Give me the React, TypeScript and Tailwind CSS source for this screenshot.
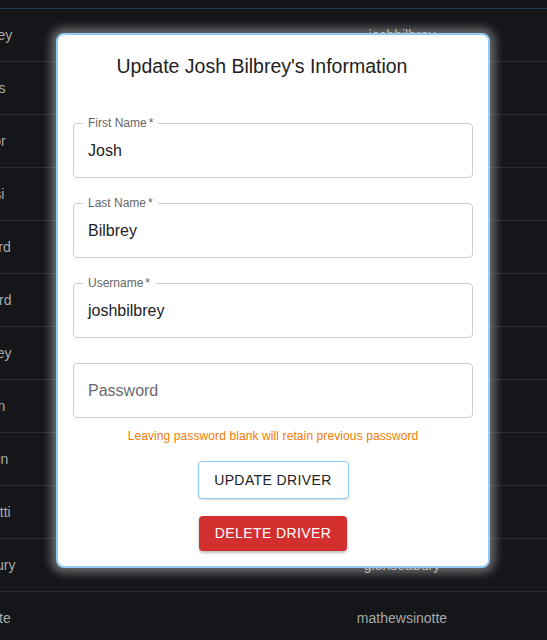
const drivers = [
  { name: "Josh Bilbrey", username: "joshbilbrey" },
  { name: "Tim Adams", username: "timadams" },
  { name: "Mick Taylor", username: "micktaylor" },
  { name: "Tony Russi", username: "tonyrussi" },
  { name: "Jan Howard", username: "janhoward" },
  { name: "Jim Bernard", username: "jimbernard" },
  { name: "Jay Godfrey", username: "jaygodfrey" },
  { name: "Jim Nelson", username: "jimnelson" },
  { name: "Glen Martin", username: "glenmartin" },
  { name: "Paul Moretti", username: "paulmoretti" },
  { name: "Len Seabury", username: "glenseabury" },
  { name: "Matt Sinotte", username: "mathewsinotte" },
];

interface FieldProps {
  label?: string;
  value?: string;
  placeholder?: string;
}

const OutlinedField: React.FC<FieldProps> = ({ label, value, placeholder }) => {
  return (
    <div className="relative h-[55px] w-full rounded-[4px] border border-[#cfcfcf] flex items-center px-[14px]">
      {label && (
        <span className="absolute -top-[8px] left-[9px] bg-white px-[5px] text-[12px] leading-[14px] text-[#666]">
          {label}
          <span className="ml-[2px]">*</span>
        </span>
      )}
      {value ? (
        <span className="text-[16px] text-[#222]">{value}</span>
      ) : (
        <span className="text-[16px] text-[#6b6b6b]">{placeholder}</span>
      )}
    </div>
  );
};

export default function App() {
  return (
    <div
      className="relative h-[640px] w-[547px] overflow-hidden bg-[#141619]"
      style={{ fontFamily: '"Liberation Sans", Arial, sans-serif' }}
    >
      <div className="h-[8px] bg-[#121417]" />
      <div className="h-[1px] bg-[#1b3e55]" />

      {/* table rows, name column runs off the left edge */}
      {drivers.map((d) => (
        <div
          key={d.username}
          className="flex h-[53px] items-center border-b border-[#2a2c30] text-[14px] text-[#a8a8a8]"
        >
          <div className="-ml-[64px] w-[300px] shrink-0 whitespace-nowrap">{d.name}</div>
          <div className="ml-[66px] w-[200px] shrink-0 text-center">{d.username}</div>
        </div>
      ))}

      <div className="absolute left-[56px] top-[33px] w-[434px] h-[535px] rounded-[8px] border-2 border-[#8fcaf3] bg-white shadow-[0_0_10px_5px_rgba(235,235,235,0.4)] flex flex-col items-center px-[15px] pt-[17px]">
        <h2 className="mr-[22px] text-[19.5px] leading-[28px] text-[#222]">
          Update Josh Bilbrey's Information
        </h2>

        <div className="mt-[43px] flex w-full flex-col gap-[25px]">
          <OutlinedField label="First Name" value="Josh" />
          <OutlinedField label="Last Name" value="Bilbrey" />
          <OutlinedField label="Username" value="joshbilbrey" />
          <OutlinedField placeholder="Password" />
        </div>

        <p className="mt-[10px] text-[12px] leading-[16px] tracking-[0.1px] text-[#f57c00]">
          Leaving password blank will retain previous password
        </p>

        <button className="mt-[17px] h-[38px] w-[151px] rounded-[4px] border border-[#90caf9] bg-white text-[14px] tracking-[0.4px] text-[#222] shadow-[0_1px_2px_rgba(0,0,0,0.15)]">
          UPDATE DRIVER
        </button>

        <button className="mt-[17px] h-[35px] w-[148px] rounded-[4px] bg-[#d32f2f] text-[14px] tracking-[0.4px] text-white shadow-[0_2px_3px_rgba(0,0,0,0.25)]">
          DELETE DRIVER
        </button>
      </div>
    </div>
  );
}
